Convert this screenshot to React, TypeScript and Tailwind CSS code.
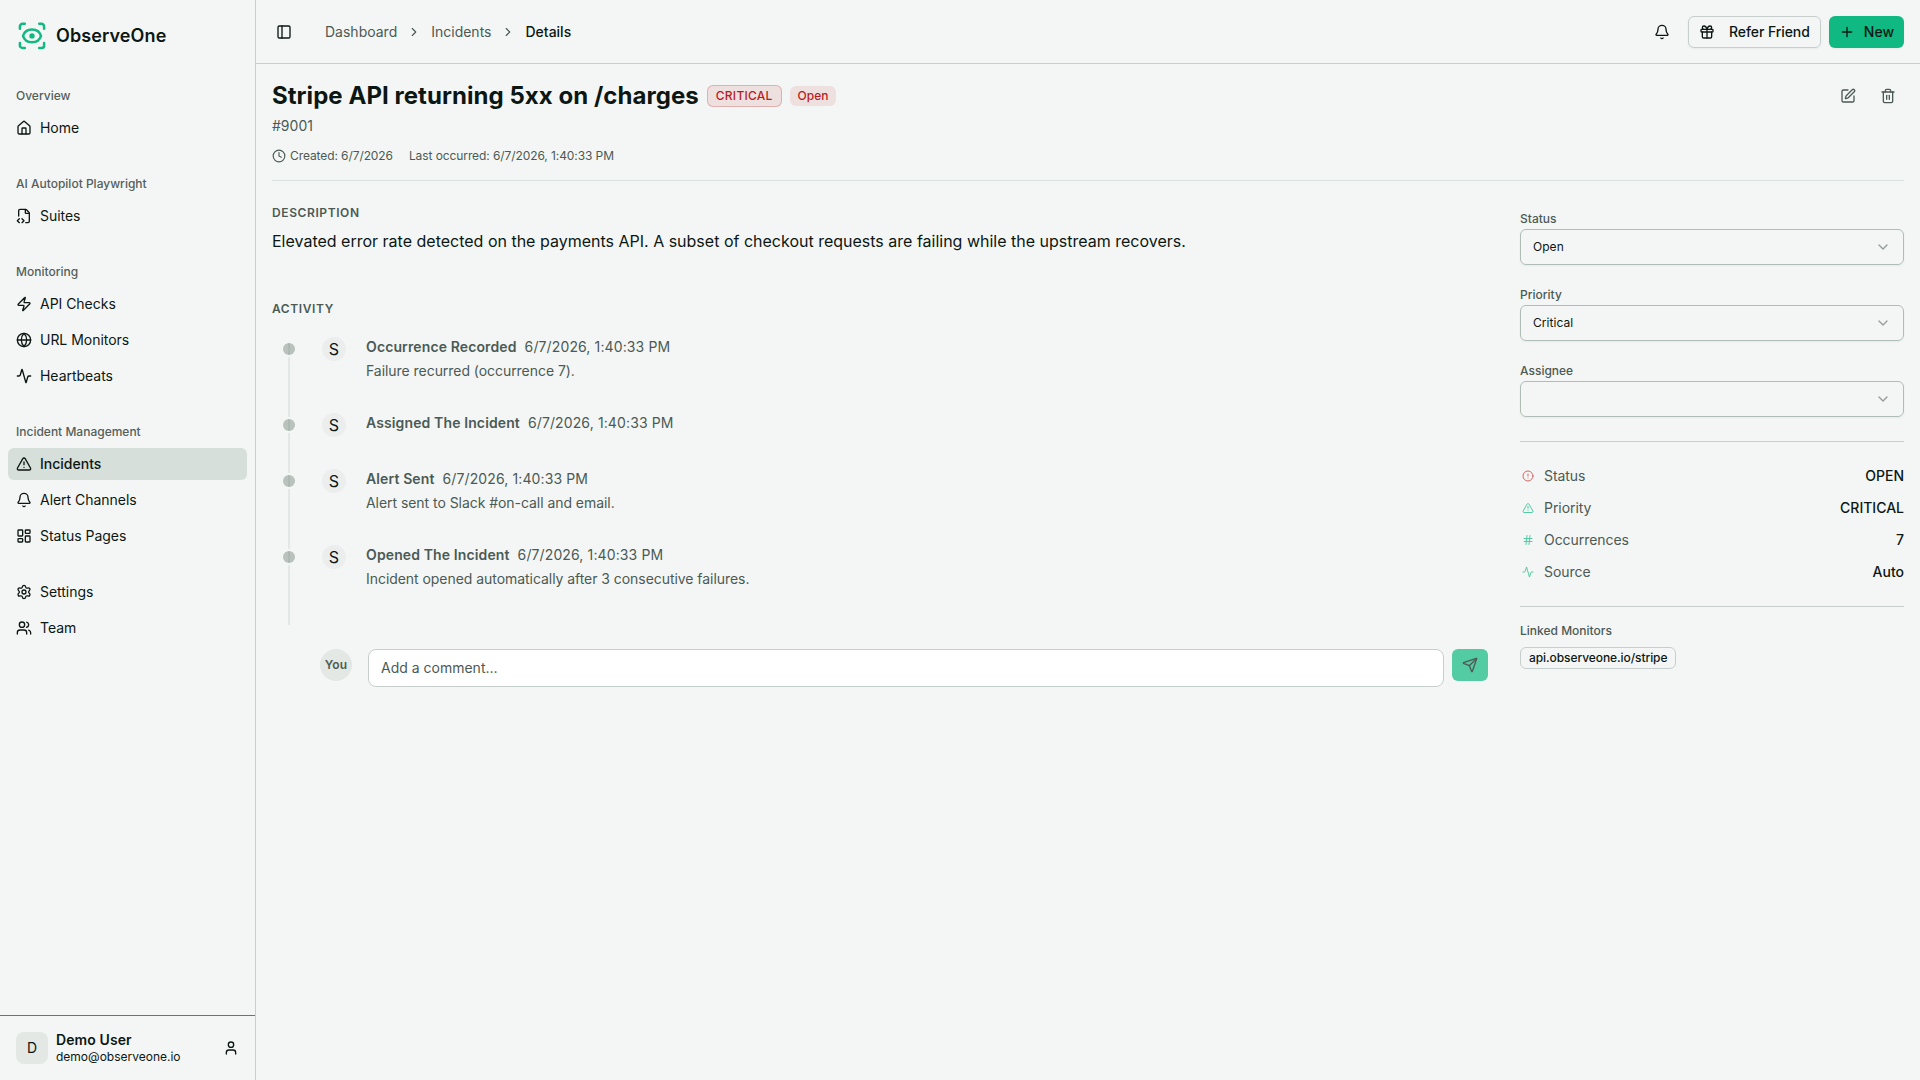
import type { ReactNode } from "react";
import {
  Activity,
  Bell,
  ChevronDown,
  ChevronRight,
  CircleAlert,
  Clock,
  FileCode2,
  Gift,
  Globe,
  Hash,
  House,
  LayoutDashboard,
  PanelLeft,
  Plus,
  Send,
  Settings,
  SquarePen,
  Trash2,
  TriangleAlert,
  User,
  Users,
  Zap,
} from "lucide-react";

const navGroups = [
  { label: "Overview", items: [{ title: "Home", icon: House }] },
  { label: "AI Autopilot Playwright", items: [{ title: "Suites", icon: FileCode2 }] },
  {
    label: "Monitoring",
    items: [
      { title: "API Checks", icon: Zap },
      { title: "URL Monitors", icon: Globe },
      { title: "Heartbeats", icon: Activity },
    ],
  },
  {
    label: "Incident Management",
    items: [
      { title: "Incidents", icon: TriangleAlert, active: true },
      { title: "Alert Channels", icon: Bell },
      { title: "Status Pages", icon: LayoutDashboard },
    ],
  },
  {
    label: "",
    items: [
      { title: "Settings", icon: Settings },
      { title: "Team", icon: Users },
    ],
  },
];

const activities = [
  { title: "Occurrence Recorded", text: "Failure recurred (occurrence 7)." },
  { title: "Assigned The Incident", text: "" },
  { title: "Alert Sent", text: "Alert sent to Slack #on-call and email." },
  {
    title: "Opened The Incident",
    text: "Incident opened automatically after 3 consecutive failures.",
  },
];

const details = [
  { label: "Status", value: "OPEN", icon: CircleAlert, color: "text-[#c62828]" },
  { label: "Priority", value: "CRITICAL", icon: TriangleAlert, color: "text-[#10b981]" },
  { label: "Occurrences", value: "7", icon: Hash, color: "text-[#10b981]" },
  { label: "Source", value: "Auto", icon: Activity, color: "text-[#10b981]" },
];

function Logo() {
  return (
    <svg
      className="size-8 text-[#10b981]"
      viewBox="0 0 32 32"
      fill="none"
      stroke="currentColor"
      strokeWidth="2.5"
      strokeLinecap="round"
      strokeLinejoin="round"
    >
      <path d="M3.900 8.700V6.400a2.600 2.600 0 0 1 2.600-2.600H8.800" />
      <path d="M23.200 3.800h2.300a2.600 2.600 0 0 1 2.600 2.600V8.700" />
      <path d="M28.100 23.100v2.300a2.600 2.600 0 0 1-2.600 2.600H23.200" />
      <path d="M8.800 28H6.500a2.600 2.600 0 0 1-2.600-2.600V23.100" />
      <path d="M7 15.900c1.200-3.900 4.800-6.400 9-6.400s7.800 2.500 9 6.400c-1.200 3.900-4.800 6.400-9 6.400s-7.800-2.500-9-6.400Z" />
      <circle cx="16" cy="15.900" r="2.700" fill="currentColor" stroke="none" />
    </svg>
  );
}

function Sidebar() {
  return (
    <aside className="flex w-64 shrink-0 flex-col border-r border-[#c6cfcb]">
      <div className="flex h-[72px] items-center gap-2 px-4">
        <Logo />
        <span className="text-lg font-semibold tracking-[0.1px]">ObserveOne</span>
      </div>
      <nav className="flex flex-1 flex-col gap-2">
        {navGroups.map((group, i) => (
          <div key={i} className="p-2">
            {group.label && (
              <div className="flex h-8 items-center px-2 text-xs font-medium text-[#545e59]">
                {group.label}
              </div>
            )}
            <ul className="flex flex-col gap-1">
              {group.items.map((item) => (
                <li
                  key={item.title}
                  className={
                    "active" in item
                      ? "flex h-8 items-center gap-2 rounded-md bg-[#d6dfda] px-2 text-sm font-medium"
                      : "flex h-8 items-center gap-2 rounded-md px-2 text-sm tracking-[-0.03px]"
                  }
                >
                  <item.icon className="size-4" />
                  {item.title}
                </li>
              ))}
            </ul>
          </div>
        ))}
      </nav>
      <div className="border-t border-[#6b756f] p-2">
        <div className="flex h-12 items-center gap-2 p-2">
          <div className="flex size-8 items-center justify-center rounded-lg bg-[#e3e8e4] text-sm">
            D
          </div>
          <div className="flex-1">
            <p className="text-sm leading-[17.5px] font-semibold tracking-[0.1px]">Demo User</p>
            <p className="text-xs leading-4">demo@observeone.io</p>
          </div>
          <User className="size-4" />
        </div>
      </div>
    </aside>
  );
}

function Header() {
  return (
    <header className="flex h-16 shrink-0 items-center justify-between border-b border-[#c6cfcb] px-4">
      <div className="flex items-center">
        <button className="-ml-1 flex size-8 items-center justify-center">
          <PanelLeft className="size-4" />
        </button>
        <nav className="ml-[25px] flex items-center gap-2.5 text-sm text-[#4b5a54]">
          <span>Dashboard</span>
          <ChevronRight className="size-3.5" />
          <span>Incidents</span>
          <ChevronRight className="size-3.5" />
          <span className="font-medium text-[#0c1713]">Details</span>
        </nav>
      </div>
      <div className="flex items-center gap-2">
        <button className="flex size-9 items-center justify-center">
          <Bell className="size-4" />
        </button>
        <button className="flex h-8 items-center gap-3.5 rounded-md border border-[#c6cfcb] px-2.5 text-sm font-medium tracking-[-0.07px] shadow-xs">
          <Gift className="size-4" />
          Refer Friend
        </button>
        <button className="flex h-8 items-center gap-[9px] rounded-md bg-[#10b981] px-2.5 text-sm font-medium shadow-xs">
          <Plus className="size-4" />
          New
        </button>
      </div>
    </header>
  );
}

function SectionTitle({ children }: { children: ReactNode }) {
  return (
    <h2 className="text-xs font-semibold tracking-wider text-[#4b5a54] uppercase">{children}</h2>
  );
}

function SelectField({ label, value }: { label: string; value: string }) {
  return (
    <div>
      <div className="mb-0.5 text-xs font-medium text-[#4b5a54]">{label}</div>
      <button className="flex h-9 w-full items-center justify-between rounded-md border border-[#b0bdb7] px-3 text-xs tracking-[0.05px] shadow-xs">
        <span>{value}</span>
        <ChevronDown className="size-4 opacity-40" />
      </button>
    </div>
  );
}

function Timeline() {
  return (
    <div className="relative mt-5">
      <div className="absolute top-1.5 -bottom-1 left-4 w-0.5 bg-[#e3e7e5]" />
      {activities.map((item) => (
        <div key={item.title} className="flex pb-8">
          <div className="relative mt-1.5 ml-[11px] size-3 rounded-full bg-[#4b6055]/35 ring-2 ring-[#f4f6f5]" />
          <div className="ml-[27px] flex size-6 items-center justify-center rounded-full bg-[#ebeeec]">
            S
          </div>
          <div className="ml-5 text-sm text-[#4b5a54]">
            <p className="flex gap-2 tracking-[0.12px]">
              <span className="font-semibold">{item.title}</span>
              <span>6/7/2026, 1:40:33 PM</span>
            </p>
            {item.text && <p className="mt-1 tracking-[-0.05px]">{item.text}</p>}
          </div>
        </div>
      ))}
    </div>
  );
}

export default function App() {
  return (
    <div className="flex h-screen overflow-hidden bg-[#f4f6f5] font-[Inter,sans-serif] text-[#0c1713]">
      <Sidebar />
      <div className="flex min-w-0 flex-1 flex-col">
        <Header />
        <main className="px-4 pt-4">
          {/* Incident heading */}
          <div className="flex items-start justify-between border-b border-[#dbe2de] pb-4">
            <div>
              <div className="flex items-center gap-2">
                <h1 className="text-2xl font-bold tracking-[0.05px]">
                  Stripe API returning 5xx on /charges
                </h1>
                <span className="rounded-md border border-[#b91c1c]/25 bg-[#b91c1c]/10 px-2 py-0.5 text-xs font-medium tracking-[0.25px] text-[#b91c1c]">
                  CRITICAL
                </span>
                <span className="rounded-md bg-[#b91c1c]/10 px-2 py-0.5 text-xs font-medium text-[#b91c1c]">
                  Open
                </span>
              </div>
              <p className="mt-1 text-sm text-[#4b5a54]">#9001</p>
              <div className="mt-3 flex items-center gap-4 text-xs tracking-[-0.09px] text-[#4b5a54]">
                <span className="flex items-center gap-1">
                  <Clock className="size-3.5" />
                  Created: 6/7/2026
                </span>
                <span>Last occurred: 6/7/2026, 1:40:33 PM</span>
              </div>
            </div>
            <div className="flex gap-2 text-[#4b5a54]">
              <button className="flex size-8 items-center justify-center">
                <SquarePen className="size-4" />
              </button>
              <button className="flex size-8 items-center justify-center">
                <Trash2 className="size-4" />
              </button>
            </div>
          </div>

          <div className="flex gap-8 pt-6">
            <div className="flex-1">
              <SectionTitle>Description</SectionTitle>
              <p className="mt-2">
                Elevated error rate detected on the payments API. A subset of checkout requests are
                failing while the upstream recovers.
              </p>
              <div className="mt-12">
                <SectionTitle>Activity</SectionTitle>
              </div>
              <Timeline />

              {/* Comment box */}
              <div className="mt-7 ml-12 flex items-start">
                <div className="flex size-8 items-center justify-center rounded-full bg-[#e3e8e4] text-xs font-semibold tracking-[0.2px] text-[#4b5a54]">
                  You
                </div>
                <div className="ml-4 flex h-[38px] flex-1 items-center rounded-lg border border-[#c6cfcb] bg-white px-3 text-sm text-[#4b5a54]">
                  Add a comment...
                </div>
                <button className="ml-2 flex h-8 w-9 items-center justify-center rounded-md bg-[#10b981] opacity-70">
                  <Send className="size-4" />
                </button>
              </div>
            </div>

            {/* Details column */}
            <div className="w-96 pt-1.5">
              <div className="flex flex-col gap-[22px]">
                <SelectField label="Status" value="Open" />
                <SelectField label="Priority" value="Critical" />
                <SelectField label="Assignee" value="" />
              </div>
              <div className="mt-6 flex flex-col gap-3 border-y border-[#c6cfcb] py-6 text-sm">
                {details.map((row) => (
                  <div key={row.label} className="flex items-center">
                    <span className="flex w-4 justify-center">
                      <row.icon className={`size-3 opacity-70 ${row.color}`} />
                    </span>
                    <span className="ml-2 flex-1 tracking-[-0.05px] text-[#4b5a54]">
                      {row.label}
                    </span>
                    <span className="font-medium">{row.value}</span>
                  </div>
                ))}
              </div>
              <div className="mt-4 mb-2 text-xs font-medium text-[#4b5a54]">Linked Monitors</div>
              <div className="flex flex-wrap">
                <span className="rounded-md border border-[#c6cfcb] px-2 py-0.5 text-xs font-medium tracking-[-0.08px]">
                  api.observeone.io/stripe
                </span>
              </div>
            </div>
          </div>
        </main>
      </div>
    </div>
  );
}
